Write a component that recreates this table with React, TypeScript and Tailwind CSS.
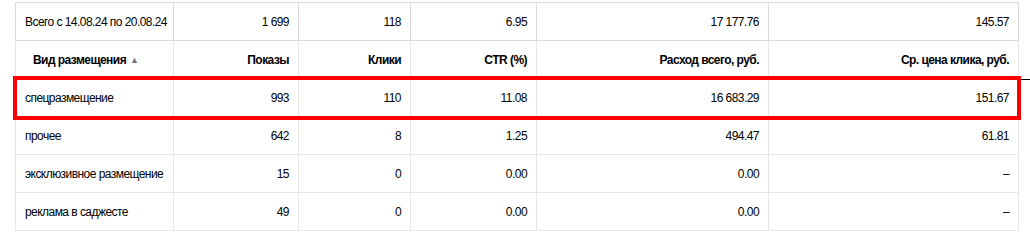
import React from 'react';

type Row = {
  name: string;
  shows: string;
  clicks: string;
  ctr: string;
  spend: string;
  cpc: string;
};

const TOTAL: Row = {
  name: 'Всего с 14.08.24 по 20.08.24',
  shows: '1 699',
  clicks: '118',
  ctr: '6.95',
  spend: '17 177.76',
  cpc: '145.57',
};

const ROWS: Row[] = [
  { name: 'спецразмещение', shows: '993', clicks: '110', ctr: '11.08', spend: '16 683.29', cpc: '151.67' },
  { name: 'прочее', shows: '642', clicks: '8', ctr: '1.25', spend: '494.47', cpc: '61.81' },
  { name: 'эксклюзивное размещение', shows: '15', clicks: '0', ctr: '0.00', spend: '0.00', cpc: '–' },
  { name: 'реклама в саджесте', shows: '49', clicks: '0', ctr: '0.00', spend: '0.00', cpc: '–' },
];

const cell = 'h-[38px] px-[9px] border border-[#e6e6e6] text-right align-middle';

export default function App() {
  return (
    <div
      className="relative w-[1030px] h-[241px] bg-white text-black overflow-hidden"
      style={{ fontFamily: '"Liberation Sans", Arial, sans-serif' }}
    >
      <div className="pt-[2px] pl-[15px]">
        <table className="table-fixed border-collapse text-[12px] tracking-[-0.55px] w-[1003px]">
          <colgroup>
            <col className="w-[158px]" />
            <col className="w-[125px]" />
            <col className="w-[112px]" />
            <col className="w-[126px]" />
            <col className="w-[232px]" />
            <col className="w-[250px]" />
          </colgroup>
          <tbody>
            <tr>
              <td className={`${cell} !text-left !border-[#dcdcdc] whitespace-nowrap`}>{TOTAL.name}</td>
              <td className={`${cell} !border-[#dcdcdc]`}>{TOTAL.shows}</td>
              <td className={`${cell} !border-[#dcdcdc]`}>{TOTAL.clicks}</td>
              <td className={`${cell} !border-[#dcdcdc]`}>{TOTAL.ctr}</td>
              <td className={`${cell} !border-[#dcdcdc]`}>{TOTAL.spend}</td>
              <td className={`${cell} !border-[#dcdcdc]`}>{TOTAL.cpc}</td>
            </tr>
            <tr className="font-bold">
              <td className={`${cell} !text-left !pl-[17px] whitespace-nowrap`}>
                Вид размещения{' '}
                <span className="text-[9px] text-[#777] relative -top-[1px] ml-[1px]">▲</span>
              </td>
              <td className={cell}>Показы</td>
              <td className={cell}>Клики</td>
              <td className={cell}>CTR (%)</td>
              <td className={cell}>Расход всего, руб.</td>
              <td className={cell}>Ср. цена клика, руб.</td>
            </tr>
            {ROWS.map((r) => (
              <tr key={r.name}>
                <td className={`${cell} !text-left whitespace-nowrap`}>{r.name}</td>
                <td className={cell}>{r.shows}</td>
                <td className={cell}>{r.clicks}</td>
                <td className={cell}>{r.ctr}</td>
                <td className={cell}>{r.spend}</td>
                <td className={cell}>{r.cpc}</td>
              </tr>
            ))}
          </tbody>
        </table>
      </div>

      {/* highlight around the first data row */}
      <div className="absolute left-[13px] top-[76px] w-[1008px] h-[44px] border-4 border-[#ff0000] pointer-events-none" />
      <div className="absolute left-[1021px] top-[79px] w-[9px] h-px bg-black" />
    </div>
  );
}
